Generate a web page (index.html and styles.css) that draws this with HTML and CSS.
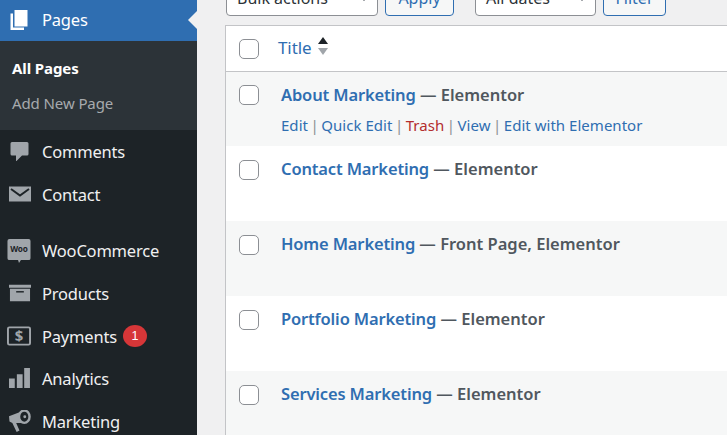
FILE: index.html
```html
<!DOCTYPE html>
<html lang="en">
<head>
<meta charset="utf-8">
<title>Pages</title>
<link rel="stylesheet" href="styles.css">
</head>
<body>
<div class="app">
  <nav class="sidebar">
    <a class="item current">
      <svg class="icon" viewBox="0 0 20 20"><path fill="#fff" d="M4.500 0h13v16.500h-13z"/><path fill="#fff" d="M.500 3.500H3v14h11V20H.500z"/></svg>
      <span>Pages</span>
      <i class="arrow"></i>
    </a>
    <div class="sub">
      <a class="sub-item active">All Pages</a>
      <a class="sub-item">Add New Page</a>
    </div>
    <a class="item">
      <svg class="icon" viewBox="0 0 20 20"><path fill="#a0a5aa" d="M2 1h15a1.500 1.500 0 0 1 1.500 1.500v10.500a1.500 1.500 0 0 1-1.500 1.500H12l-6 6v-6H2A1.500 1.500 0 0 1 .500 13V2.500A1.500 1.500 0 0 1 2 1z"/></svg>
      <span>Comments</span>
    </a>
    <a class="item">
      <svg class="icon wide" viewBox="0 0 22 15"><path fill="#a0a5aa" d="M0 0h22v15H0z"/><path fill="none" stroke="#1d2327" stroke-width="2" d="M2 2.500l9 6.500 9-6.500"/></svg>
      <span>Contact</span>
    </a>
    <a class="item group">
      <svg class="icon woo" viewBox="0 0 24 25"><path fill="#a0a5aa" d="M2 0h20a2 2 0 0 1 2 2v18a2 2 0 0 1-2 2h-8l-2 3-1-3H2a2 2 0 0 1-2-2V2a2 2 0 0 1 2-2z"/><text x="12" y="14" text-anchor="middle" class="woo-text">Woo</text></svg>
      <span>WooCommerce</span>
    </a>
    <a class="item">
      <svg class="icon wide" viewBox="0 0 23 17"><path fill="#a0a5aa" d="M0 0h23v3H0zM1 4h21v13H1z"/><path fill="#1d2327" d="M7.500 6.500h8V8h-8z"/></svg>
      <span>Products</span>
    </a>
    <a class="item">
      <svg class="icon woo" viewBox="0 0 25 20"><rect x="1" y="1" width="23" height="18" rx="1.500" fill="none" stroke="#a0a5aa" stroke-width="2"/><text x="12.500" y="15.500" text-anchor="middle" class="dollar">$</text></svg>
      <span>Payments</span>
      <b class="badge">1</b>
    </a>
    <a class="item">
      <svg class="icon wide" viewBox="0 0 21 21"><path fill="#a0a5aa" d="M0 10h5.500v9H0zM7.500 6H13v13H7.500zM14.500 0H20v19h-5.500z"/></svg>
      <span>Analytics</span>
    </a>
    <a class="item">
      <svg class="icon wide" viewBox="0 0 23 23"><path fill="#a0a5aa" d="M0 6.500L13 1.500l2 12L7.500 13.500l3.500 8-3 1.500-4.500-9.500L.500 12z"/><ellipse cx="16" cy="7" rx="5.500" ry="6.500" fill="#1d2327" stroke="#a0a5aa" stroke-width="2.500"/><circle cx="16.500" cy="7" r="1.500" fill="#a0a5aa"/></svg>
      <span>Marketing</span>
    </a>
  </nav>
  <main class="main">
    <div class="toolbar">
      <div class="select bulk">Bulk actions<i class="caret"></i></div>
      <div class="btn apply">Apply</div>
      <div class="select dates">All dates<i class="caret"></i></div>
      <div class="btn filter">Filter</div>
    </div>
    <div class="table">
      <div class="head">
        <i class="check"></i>
        <a class="title-col">Title</a>
        <span class="sort"><i class="up"></i><i class="down"></i></span>
      </div>
      <div class="row alt first-row">
        <i class="check"></i>
        <div class="cell">
          <div class="name"><a>About Marketing</a> — Elementor</div>
          <div class="actions"><a>Edit</a><span class="sep">|</span><a>Quick Edit</a><span class="sep">|</span><a class="trash">Trash</a><span class="sep">|</span><a>View</a><span class="sep">|</span><a>Edit with Elementor</a></div>
        </div>
      </div>
      <div class="row">
        <i class="check"></i>
        <div class="cell"><div class="name"><a>Contact Marketing</a> — Elementor</div></div>
      </div>
      <div class="row alt">
        <i class="check"></i>
        <div class="cell"><div class="name"><a>Home Marketing</a> — Front Page, Elementor</div></div>
      </div>
      <div class="row">
        <i class="check"></i>
        <div class="cell"><div class="name"><a>Portfolio Marketing</a> — Elementor</div></div>
      </div>
      <div class="row alt">
        <i class="check"></i>
        <div class="cell"><div class="name"><a>Services Marketing</a> — Elementor</div></div>
      </div>
    </div>
  </main>
</div>
</body>
</html>
```
FILE: styles.css
```css
* { box-sizing: border-box; }
html, body { margin: 0; height: 100%; overflow: hidden; }
body { font-family: "Noto Sans", "Open Sans", sans-serif; background: #f0f0f1; color: #3c434a; }
.app { display: flex; height: 435px; overflow: hidden; }

.sidebar { width: 197px; flex: none; background: #1d2327; color: #f0f0f1; font-size: 16.500px; letter-spacing: -.2px; }
.item { display: flex; align-items: center; height: 42.700px; position: relative; }
.item .icon { width: 20px; height: 20px; margin-left: 10px; margin-right: 12px; flex: none; }
.item .icon.wide { width: 22px; height: 22px; margin-left: 9px; margin-right: 11px; }
.item .icon.woo { width: 24px; height: 24px; margin-left: 7px; margin-right: 11px; }
.current { height: 41px; padding-bottom: 2px; background: #2f6eb1; color: #fff; }
.arrow { position: absolute; right: 0; top: 11px; border: 9px solid transparent; border-right-color: #f0f0f1; border-left-width: 0; }
.group { margin-top: 14px; }
.sub { height: 89px; background: #2c3338; padding-top: 10px; font-size: 15px; letter-spacing: -.1px; }
.sub-item { display: block; height: 35px; line-height: 35px; padding-left: 12px; color: #a7aaad; }
.sub-item.active { color: #fff; font-weight: 700; }
.woo-text { font: 700 8.500px "Noto Sans", sans-serif; fill: #1d2327; }
.dollar { font: 700 15.500px "Noto Sans", sans-serif; fill: #a0a5aa; }
.badge { width: 24px; height: 22px; border-radius: 50%; background: #d63638; color: #fff; font: 400 12.500px/22px "Liberation Sans", sans-serif; text-align: center; margin-left: 6px; }

.main { flex: 1; min-width: 0; padding-left: 29px; }
.toolbar { display: flex; height: 32px; margin-top: -16px; margin-bottom: 9px; font-size: 16px; }
.select { position: relative; background: #fff; border: 1px solid #8c8f94; border-radius: 4px; padding-left: 10px; line-height: 27px; color: #2c3338; }
.caret { position: absolute; right: 10px; top: 13px; border: 3px solid transparent; border-top-color: #50575e; }
.bulk { width: 152px; margin-right: 7px; }
.dates { width: 121px; margin-right: 7px; }
.btn { border: 1px solid #2f6eb1; border-radius: 4px; background: #f6f7f7; color: #2f6eb1; text-align: center; line-height: 27px; }
.apply { width: 69px; margin-right: 21px; }
.filter { width: 63px; }

.table { width: 620px; margin-left: -1px; border: 1px solid #c3c4c7; border-right: 0; background: #fff; font-size: 16.500px; letter-spacing: -.1px; }
.head { display: flex; align-items: center; height: 46px; padding-left: 13px; border-bottom: 1px solid #c3c4c7; }
.head .check { margin-top: 0; }
.title-col { color: #2f6eb1; margin-left: 19px; margin-top: -2px; font-size: 17px; }
.sort { display: flex; flex-direction: column; gap: 4px; margin-left: 7px; margin-top: -5px; }
.up { border: 5px solid transparent; border-top: 0; border-bottom: 7px solid #1d2327; }
.down { border: 5px solid transparent; border-bottom: 0; border-top: 7px solid #a0a5aa; }
.row { display: flex; height: 75px; padding: 12px 0 0 13px; }
.first-row { height: 74px; }
.alt { background: #f6f7f7; }
.check { display: block; width: 20px; height: 20px; margin-top: 2px; flex: none; background: #fff; border: 1px solid #8c8f94; border-radius: 5px; }
.first-row .check { margin-top: 1px; }
.cell { margin-left: 22px; }
.name { line-height: 22px; font-weight: 600; letter-spacing: 0; color: #50575e; }
.name a { color: #2f6eb1; letter-spacing: -.15px; }
.actions { font-size: 15px; letter-spacing: .03px; line-height: 20px; margin-top: 9px; color: #8c8f94; }
.actions a { color: #2f6eb1; }
.actions .trash { color: #b32d2e; }
.sep { margin: 0 2.500px; }
```
